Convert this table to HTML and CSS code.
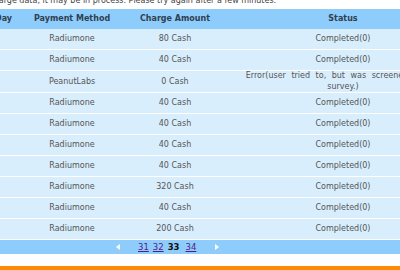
FILE: index.html
```html
<!DOCTYPE html>
<html>
<head>
<meta charset="utf-8">
<link rel="stylesheet" href="styles.css">
</head>
<body>
<div class="page">
  <p class="notice">If the record is not listed due to large data, it may be in process. Please try again after a few minutes.</p>
  <table class="history">
    <colgroup>
      <col class="c-day"><col class="c-method"><col class="c-amount"><col class="c-status">
    </colgroup>
    <thead>
      <tr><th>Day</th><th>Payment Method</th><th>Charge Amount</th><th>Status</th></tr>
    </thead>
    <tbody>
      <tr><td></td><td>Radiumone</td><td>80 Cash</td><td class="status">Completed(0)</td></tr>
      <tr><td></td><td>Radiumone</td><td>40 Cash</td><td class="status">Completed(0)</td></tr>
      <tr><td></td><td>PeanutLabs</td><td>0 Cash</td><td class="status error">Error(user tried to, but was screened out of survey.)</td></tr>
      <tr><td></td><td>Radiumone</td><td>40 Cash</td><td class="status">Completed(0)</td></tr>
      <tr><td></td><td>Radiumone</td><td>40 Cash</td><td class="status">Completed(0)</td></tr>
      <tr><td></td><td>Radiumone</td><td>40 Cash</td><td class="status">Completed(0)</td></tr>
      <tr><td></td><td>Radiumone</td><td>40 Cash</td><td class="status">Completed(0)</td></tr>
      <tr><td></td><td>Radiumone</td><td>320 Cash</td><td class="status">Completed(0)</td></tr>
      <tr><td></td><td>Radiumone</td><td>40 Cash</td><td class="status">Completed(0)</td></tr>
      <tr><td></td><td>Radiumone</td><td>200 Cash</td><td class="status">Completed(0)</td></tr>
    </tbody>
    <tfoot>
      <tr><td colspan="4" class="pager-cell">
        <div class="pager">
          <span class="arrow arrow-left"></span>
          <a href="#" class="pg">31</a>
          <a href="#" class="pg">32</a>
          <b class="pg current">33</b>
          <a href="#" class="pg">34</a>
          <span class="arrow arrow-right"></span>
        </div>
      </td></tr>
    </tfoot>
  </table>
  <div class="footer-bar"></div>
</div>
</body>
</html>
```
FILE: styles.css
```css
html, body {
  margin: 0;
  padding: 0;
  background: #fff;
  overflow: hidden;
}
body {
  width: 400px;
  height: 270px;
  font-family: "DejaVu Sans", Verdana, sans-serif;
  font-size: 8px;
  color: #555;
}
.page {
  margin-left: -20px;
  margin-top: -5px;
  width: 480px;
}
.notice {
  margin: 0 0 3px 0;
  height: 11px;
  line-height: 11px;
  white-space: nowrap;
  text-indent: -112px;
  color: #444;
}
.history {
  border-collapse: collapse;
  table-layout: fixed;
  width: 473px;
}
.c-day { width: 47px; }
.c-method { width: 90px; }
.c-amount { width: 116px; }
.c-status { width: 220px; }
.history th {
  background: #8ecdfb;
  color: #2e3f52;
  font-weight: bold;
  height: 20px;
  padding: 0;
  text-align: center;
  line-height: 10px;
}
.history td {
  background: #d9eefd;
  border-top: 1px solid #fff;
  height: 20px;
  padding: 0 4px;
  text-align: center;
  line-height: 10px;
  color: #555;
}
.history td.status {
  padding: 0 10px;
}
.history td.error {
  word-spacing: 3px;
  line-height: 10.5px;
}
.history tbody tr:first-child td {
  border-top: none;
  height: 20px;
}
.history .pager-cell {
  background: #8ecdfb;
  height: 14px;
  padding: 0;
  border-top: 1px solid #fff;
}
.pager {
  display: flex;
  align-items: center;
  padding-left: 136px;
  height: 14px;
}
.arrow {
  width: 0;
  height: 0;
  border-top: 3px solid transparent;
  border-bottom: 3px solid transparent;
}
.arrow-left {
  border-right: 4px solid #fff;
  margin-right: 18px;
}
.arrow-right {
  border-left: 4px solid #fff;
  margin-left: 15px;
}
.pg {
  color: #551a8b;
  text-decoration: underline;
  margin-right: 4px;
  font-size: 8.5px;
}
.pg.current {
  color: #111;
  text-decoration: none;
  font-weight: bold;
  margin-right: 6px;
}
.footer-bar {
  margin-top: 12px;
  height: 10px;
  background: #ff8c00;
}
```
